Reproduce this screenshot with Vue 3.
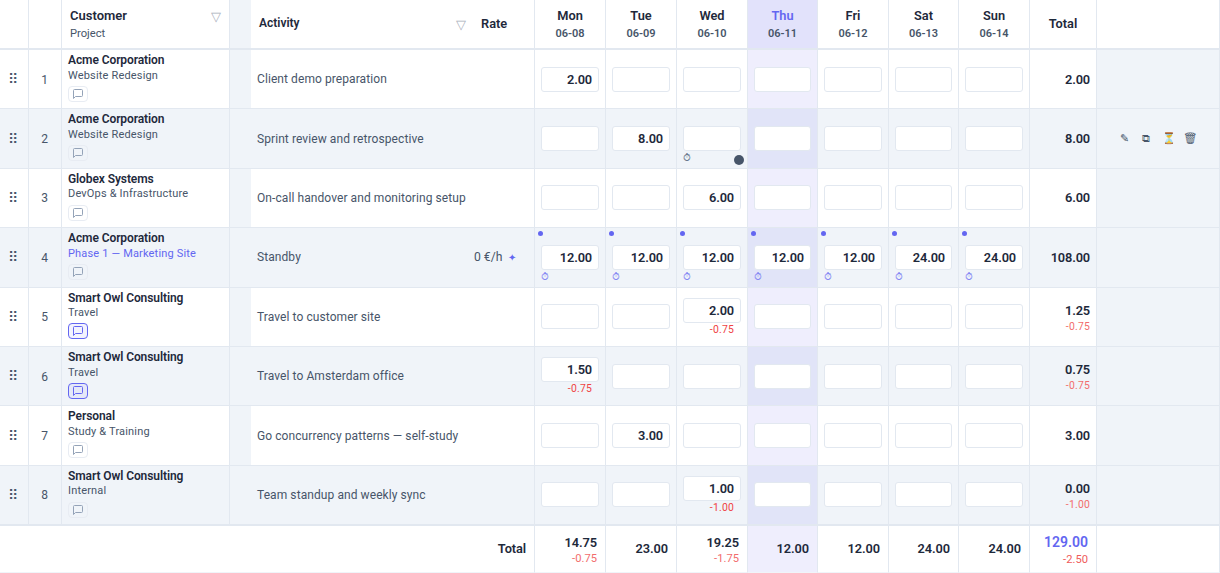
<script setup>
const days = [
  { name: 'Mon', date: '06-08', total: '14.75', sub: '-0.75' },
  { name: 'Tue', date: '06-09', total: '23.00' },
  { name: 'Wed', date: '06-10', total: '19.25', sub: '-1.75' },
  { name: 'Thu', date: '06-11', total: '12.00', today: true },
  { name: 'Fri', date: '06-12', total: '12.00' },
  { name: 'Sat', date: '06-13', total: '24.00' },
  { name: 'Sun', date: '06-14', total: '24.00' },
]

const rows = [
  { customer: 'Acme Corporation', project: 'Website Redesign', activity: 'Client demo preparation', hours: { 0: '2.00' }, total: '2.00' },
  { customer: 'Acme Corporation', project: 'Website Redesign', activity: 'Sprint review and retrospective', hours: { 1: '8.00' }, total: '8.00', hovered: true, activeDay: 2 },
  { customer: 'Globex Systems', project: 'DevOps & Infrastructure', activity: 'On-call handover and monitoring setup', hours: { 2: '6.00' }, total: '6.00' },
  { customer: 'Acme Corporation', project: 'Phase 1 — Marketing Site', linked: true, activity: 'Standby', rate: '0 €/h', hours: ['12.00', '12.00', '12.00', '12.00', '12.00', '24.00', '24.00'], standby: true, total: '108.00' },
  { customer: 'Smart Owl Consulting', project: 'Travel', activity: 'Travel to customer site', hours: { 2: '2.00' }, subs: { 2: '-0.75' }, total: '1.25', sub: '-0.75', noted: true },
  { customer: 'Smart Owl Consulting', project: 'Travel', activity: 'Travel to Amsterdam office', hours: { 0: '1.50' }, subs: { 0: '-0.75' }, total: '0.75', sub: '-0.75', noted: true },
  { customer: 'Personal', project: 'Study & Training', activity: 'Go concurrency patterns — self-study', hours: { 1: '3.00' }, total: '3.00' },
  { customer: 'Smart Owl Consulting', project: 'Internal', activity: 'Team standup and weekly sync', hours: { 2: '1.00' }, subs: { 2: '-1.00' }, total: '0.00', sub: '-1.00' },
]
</script>

<template>
  <div class="sheet">
    <div class="row head">
      <div class="cell"></div>
      <div class="cell"></div>
      <div class="cell customer-head">
        <div><b>Customer</b><span>Project</span></div>
        <i class="filter">▽</i>
      </div>
      <div class="cell gutter"></div>
      <div class="cell activity-head"><b>Activity</b><i class="filter">▽</i></div>
      <div class="cell rate-head">Rate</div>
      <div v-for="d in days" :key="d.name" class="cell day-head" :class="{ today: d.today }">
        <b>{{ d.name }}</b><span>{{ d.date }}</span>
      </div>
      <div class="cell total-head">Total</div>
      <div class="cell"></div>
    </div>

    <div v-for="(r, i) in rows" :key="i" class="row body" :class="{ alt: i % 2 }">
      <div class="cell grip">⠿</div>
      <div class="cell number">{{ i + 1 }}</div>
      <div class="cell customer">
        <b>{{ r.customer }}</b>
        <span :class="{ linked: r.linked }">{{ r.project }}</span>
        <button class="note" :class="{ noted: r.noted }">
          <svg viewBox="0 0 24 24"><path d="M21 15a2 2 0 0 1-2 2H7l-4 4V5a2 2 0 0 1 2-2h14a2 2 0 0 1 2 2z" /></svg>
        </button>
      </div>
      <div class="cell gutter"></div>
      <div class="cell activity">{{ r.activity }}</div>
      <div class="cell rate"><template v-if="r.rate">{{ r.rate }}<i>✦</i></template></div>
      <div v-for="(d, n) in days" :key="n" class="cell day" :class="{ today: d.today }">
        <div class="entry">{{ r.hours[n] }}</div>
        <div v-if="r.subs && r.subs[n]" class="sub">{{ r.subs[n] }}</div>
        <i v-if="r.standby" class="dot"></i>
        <i v-if="r.standby || r.activeDay === n" class="timer" :class="{ accent: r.standby }">⏱</i>
        <i v-if="r.activeDay === n" class="handle"></i>
      </div>
      <div class="cell sum">
        <b>{{ r.total }}</b><span v-if="r.sub">{{ r.sub }}</span>
      </div>
      <div class="cell actions">
        <template v-if="r.hovered"><i>✎</i><i>⧉</i><i>⏳</i><i>🗑</i></template>
      </div>
    </div>

    <div class="row foot">
      <div class="cell foot-label">Total</div>
      <div v-for="d in days" :key="d.name" class="cell day-sum" :class="{ today: d.today }">
        <b>{{ d.total }}</b><span v-if="d.sub">{{ d.sub }}</span>
      </div>
      <div class="cell grand"><b>129.00</b><span>-2.50</span></div>
      <div class="cell"></div>
    </div>
  </div>
</template>

<style>
body { background: #fff; overflow: hidden; }
</style>

<style scoped>
.sheet {
  width: 1220px;
  font-family: Roboto, "Noto Sans", sans-serif;
  font-size: 12px;
  color: #1e293b;
}
.sheet * { box-sizing: border-box; }
i { font-style: normal; }
b { font-weight: 600; }
.row {
  display: grid;
  grid-template-columns: 29px 33px 168px 21px 217px 67px 71px 71px 71px 70px 71px 70px 71px 67px 123px;
}
.cell {
  position: relative;
  min-width: 0;
  border-right: 1px solid #e2e8f0;
  border-bottom: 1px solid #e2e8f0;
  white-space: nowrap;
}
.head { height: 50px; }
.head .cell { border-bottom-width: 2px; }
.rate-head, .total-head { font-weight: 600; }
.gutter, .head .gutter { background: #f0f4f9; border-right: 0; }
.customer-head {
  display: flex;
  justify-content: space-between;
  padding: 7px 8px 0;
}
.customer-head b, .day-head b { display: block; font-size: 13px; line-height: 18px; }
.customer-head span, .day-head span {
  display: block;
  font-size: 11.2px;
  line-height: 18px;
  color: #475569;
}
.filter { font-size: 13px; line-height: 20px; color: #a9b0bb; }
.activity-head {
  display: flex;
  justify-content: space-between;
  padding: 14px 2px 0 8px;
  border-right: 0;
}
.activity-head b { font-size: 12px; line-height: 18px; }
.activity-head .filter { line-height: 22px; }
.rate-head { padding: 15px 0 0 13px; font-size: 12.8px; line-height: 18px; }
.day-head { padding-top: 7px; text-align: center; }
.day-head b { font-size: 12.8px; }
.day-head span { font-size: 11px; font-weight: 600; }
.day-head.today { background: #e2e2fb; }
.day-head.today b { color: #6366f1; }
.total-head { font-size: 12.8px; line-height: 48px; text-align: center; }

.body { height: 59.4px; }
.body:nth-last-child(2) { height: 60.2px; }
.body:nth-last-child(2) .cell { border-bottom-width: 2px; }
.body.alt, .actions { background: #f0f4f9; }
.grip, .number {
  display: flex;
  align-items: center;
  justify-content: center;
  color: #475569;
}
.grip { padding-right: 2px; font-size: 14px; }
.number { padding: 1px 1px 0 0; font-size: 12px; }
.customer { padding: 3px 6px 0; }
.customer b {
  display: block;
  margin-bottom: -1px;
  font-size: 12px;
  line-height: 15.6px;
  letter-spacing: -0.09px;
}
.customer span {
  display: block;
  font-size: 11px;
  line-height: 15px;
  letter-spacing: 0.17px;
  color: #475569;
}
.customer .linked { color: #6366f1; }
.note {
  display: flex;
  align-items: center;
  justify-content: center;
  width: 20px;
  height: 16px;
  margin: 3.2px 0 0;
  padding: 0;
  border: 1px solid #e8ecf3;
  border-radius: 4px;
  background: transparent;
  color: #94a3b8;
}
.note.noted { border-color: #6366f1; background: rgba(99, 102, 241, 0.08); color: #6366f1; }
.note svg {
  width: 12px;
  height: 12px;
  fill: none;
  stroke: currentColor;
  stroke-width: 2;
  stroke-linejoin: round;
}
.activity {
  display: flex;
  align-items: center;
  padding-left: 6px;
  border-right: 0;
  letter-spacing: 0.08px;
  color: #475569;
}
.rate {
  display: flex;
  align-items: center;
  padding-left: 6px;
  font-size: 12.16px;
  color: #475569;
}
.rate i { margin-left: 6px; font-size: 10.4px; color: #6366f1; }
.day {
  display: flex;
  flex-direction: column;
  justify-content: center;
  padding: 0 6px;
}
.entry {
  height: 25px;
  padding-right: 6px;
  border: 1px solid #e2e8f0;
  border-radius: 3px;
  background: #fff;
  font-size: 12.8px;
  font-weight: 600;
  line-height: 24px;
  letter-spacing: -0.15px;
  text-align: right;
}
.sub {
  padding: 1px 7px 0 0;
  font-size: 10.4px;
  line-height: 11.6px;
  letter-spacing: 0.2px;
  text-align: right;
  color: #ef4444;
}
.body .today, .foot .today { background: #efeefd; }
.body.alt .today { background: #e1e4f8; }
.dot {
  position: absolute;
  top: 3px;
  left: 3px;
  width: 5px;
  height: 5px;
  border-radius: 50%;
  background: #6366f1;
}
.timer {
  position: absolute;
  left: 6px;
  bottom: 4px;
  font-size: 10.4px;
  line-height: 12px;
  color: #64748b;
}
.timer.accent { color: #8184f3; }
.handle {
  position: absolute;
  right: 3px;
  bottom: 3px;
  width: 10px;
  height: 10px;
  border-radius: 50%;
  background: #475569;
}
.sum, .day-sum, .grand {
  display: flex;
  flex-direction: column;
  justify-content: center;
  padding-right: 6px;
  text-align: right;
}
.sum b, .day-sum b { font-size: 12.8px; line-height: 17px; letter-spacing: -0.15px; }
.sum span {
  margin-bottom: -2px;
  font-size: 10.4px;
  line-height: 15px;
  letter-spacing: 0.2px;
  color: #f26d6d;
}
.actions {
  display: flex;
  align-items: center;
  justify-content: center;
  gap: 9.6px;
  padding: 0 2px 1px 0;
  color: #475569;
  font-size: 11.2px;
}
.actions i { width: 12px; text-align: center; }

.foot { height: 47px; }
.foot .cell { border-bottom-color: #f0f4f9; }
.foot-label {
  grid-column: span 6;
  padding-right: 8px;
  font-size: 12.8px;
  font-weight: 600;
  line-height: 46px;
  letter-spacing: -0.1px;
  text-align: right;
}
.day-sum { padding-right: 8px; }
.day-sum b { letter-spacing: -0.1px; }
.day-sum span { margin: 1px 0 -3px; font-size: 11.2px; line-height: 14px; color: #f26d6d; }
.grand { padding-right: 8px; }
.grand b { font-size: 14px; line-height: 18px; color: #6366f1; }
.grand span { margin: 1px 0 -3px; font-size: 11.2px; line-height: 15px; color: #ef5b5b; }
</style>
